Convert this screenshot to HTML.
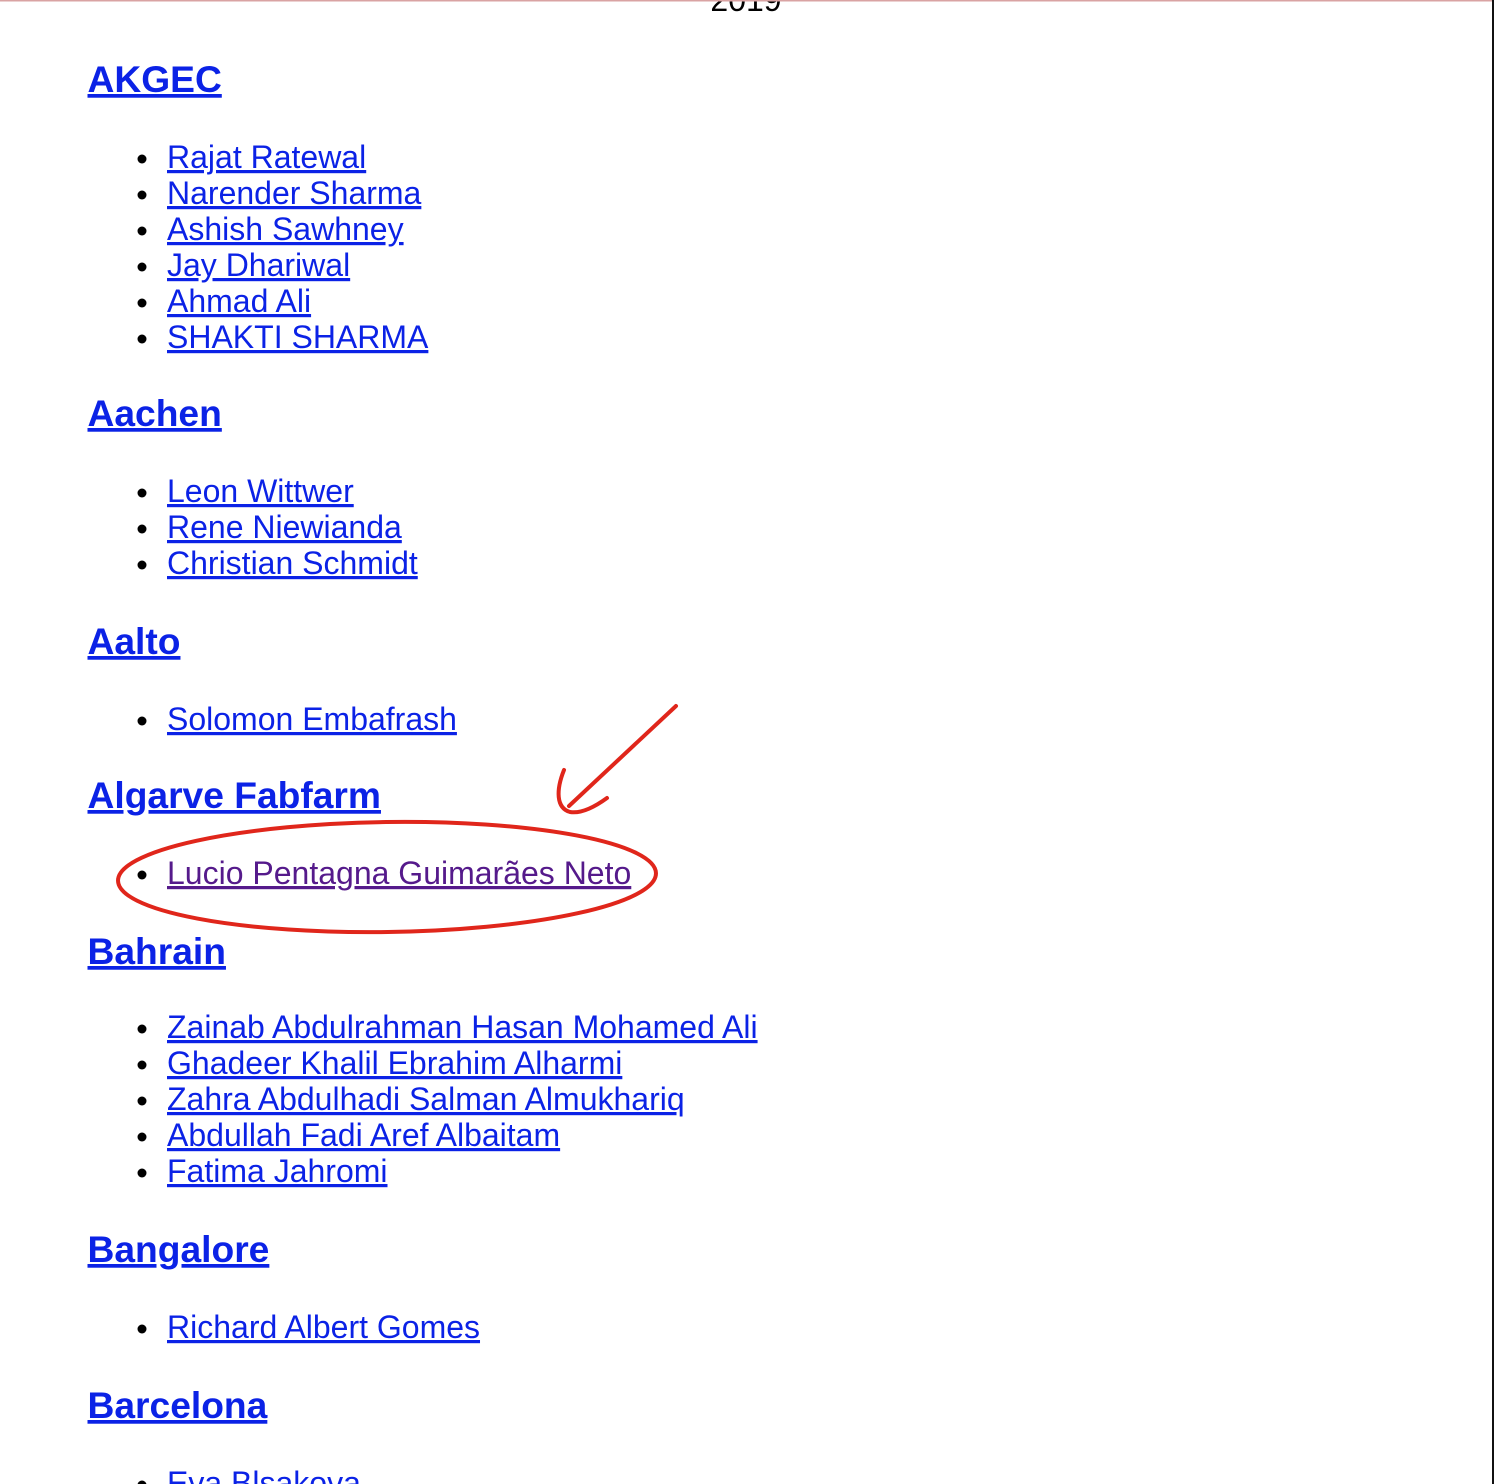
<!DOCTYPE html>
<html><head><meta charset="utf-8"><style>
html,body{margin:0;padding:0;background:#fff;overflow:hidden}
svg{display:block}
text{font-family:"Liberation Sans",Arial,sans-serif}
.h{font-size:37.2px;font-weight:bold;fill:#0b22e6;text-decoration:underline}
.i{font-size:32px;fill:#0b22e6;text-decoration:underline}
.v{font-size:32px;fill:#551a8b;text-decoration:underline}
</style></head><body>
<svg width="1496" height="1484" viewBox="0 0 1496 1484" xmlns="http://www.w3.org/2000/svg">
<rect x="0" y="0" width="1496" height="1484" fill="#fff"/>
<text x="746" y="11" text-anchor="middle" font-size="32" fill="#000">2019</text>
<rect x="0" y="0" width="1493" height="1.5" fill="#d9a3a3"/>
<rect x="1492" y="0" width="2" height="1484" fill="#111"/>

<text class="h" x="87.5" y="92">AKGEC</text>
<g fill="#000"><circle cx="142" cy="159" r="4.5"/><circle cx="142" cy="195" r="4.5"/><circle cx="142" cy="231" r="4.5"/><circle cx="142" cy="267" r="4.5"/><circle cx="142" cy="303" r="4.5"/><circle cx="142" cy="339" r="4.5"/>
<circle cx="142" cy="493" r="4.5"/><circle cx="142" cy="529" r="4.5"/><circle cx="142" cy="565" r="4.5"/>
<circle cx="142" cy="721" r="4.5"/><circle cx="142" cy="875" r="4.5"/>
<circle cx="142" cy="1029" r="4.5"/><circle cx="142" cy="1065" r="4.5"/><circle cx="142" cy="1101" r="4.5"/><circle cx="142" cy="1137" r="4.5"/><circle cx="142" cy="1173" r="4.5"/>
<circle cx="142" cy="1329" r="4.5"/><circle cx="142" cy="1485" r="4.5"/></g>
<text class="i" x="167" y="168">Rajat Ratewal</text>
<text class="i" x="167" y="204">Narender Sharma</text>
<text class="i" x="167" y="240">Ashish Sawhney</text>
<text class="i" x="167" y="276">Jay Dhariwal</text>
<text class="i" x="167" y="312">Ahmad Ali</text>
<text class="i" x="167" y="348">SHAKTI SHARMA</text>

<text class="h" x="87.5" y="426">Aachen</text>
<text class="i" x="167" y="502">Leon Wittwer</text>
<text class="i" x="167" y="538">Rene Niewianda</text>
<text class="i" x="167" y="574">Christian Schmidt</text>

<text class="h" x="87.5" y="654">Aalto</text>
<text class="i" x="167" y="730">Solomon Embafrash</text>

<text class="h" x="87.5" y="808">Algarve Fabfarm</text>
<text class="v" x="167" y="884">Lucio Pentagna Guimarães Neto</text>

<text class="h" x="87.5" y="964">Bahrain</text>
<text class="i" x="167" y="1038">Zainab Abdulrahman Hasan Mohamed Ali</text>
<text class="i" x="167" y="1074">Ghadeer Khalil Ebrahim Alharmi</text>
<text class="i" x="167" y="1110">Zahra Abdulhadi Salman Almukhariq</text>
<text class="i" x="167" y="1146">Abdullah Fadi Aref Albaitam</text>
<text class="i" x="167" y="1182">Fatima Jahromi</text>

<text class="h" x="87.5" y="1262">Bangalore</text>
<text class="i" x="167" y="1338">Richard Albert Gomes</text>

<text class="h" x="87.5" y="1418">Barcelona</text>
<text class="i" x="167" y="1494">Eva Blsakova</text>

<g fill="none" stroke="#e0261b" stroke-width="4" stroke-linecap="round">
<ellipse cx="387" cy="877" rx="269" ry="55" transform="rotate(-0.8 387 877)"/>
<path d="M676 706 L569 806"/>
<path d="M564 770 C556 790 556 808 570 812 C582 814 596 806 607 798"/>
</g>
</svg>
</body></html>
